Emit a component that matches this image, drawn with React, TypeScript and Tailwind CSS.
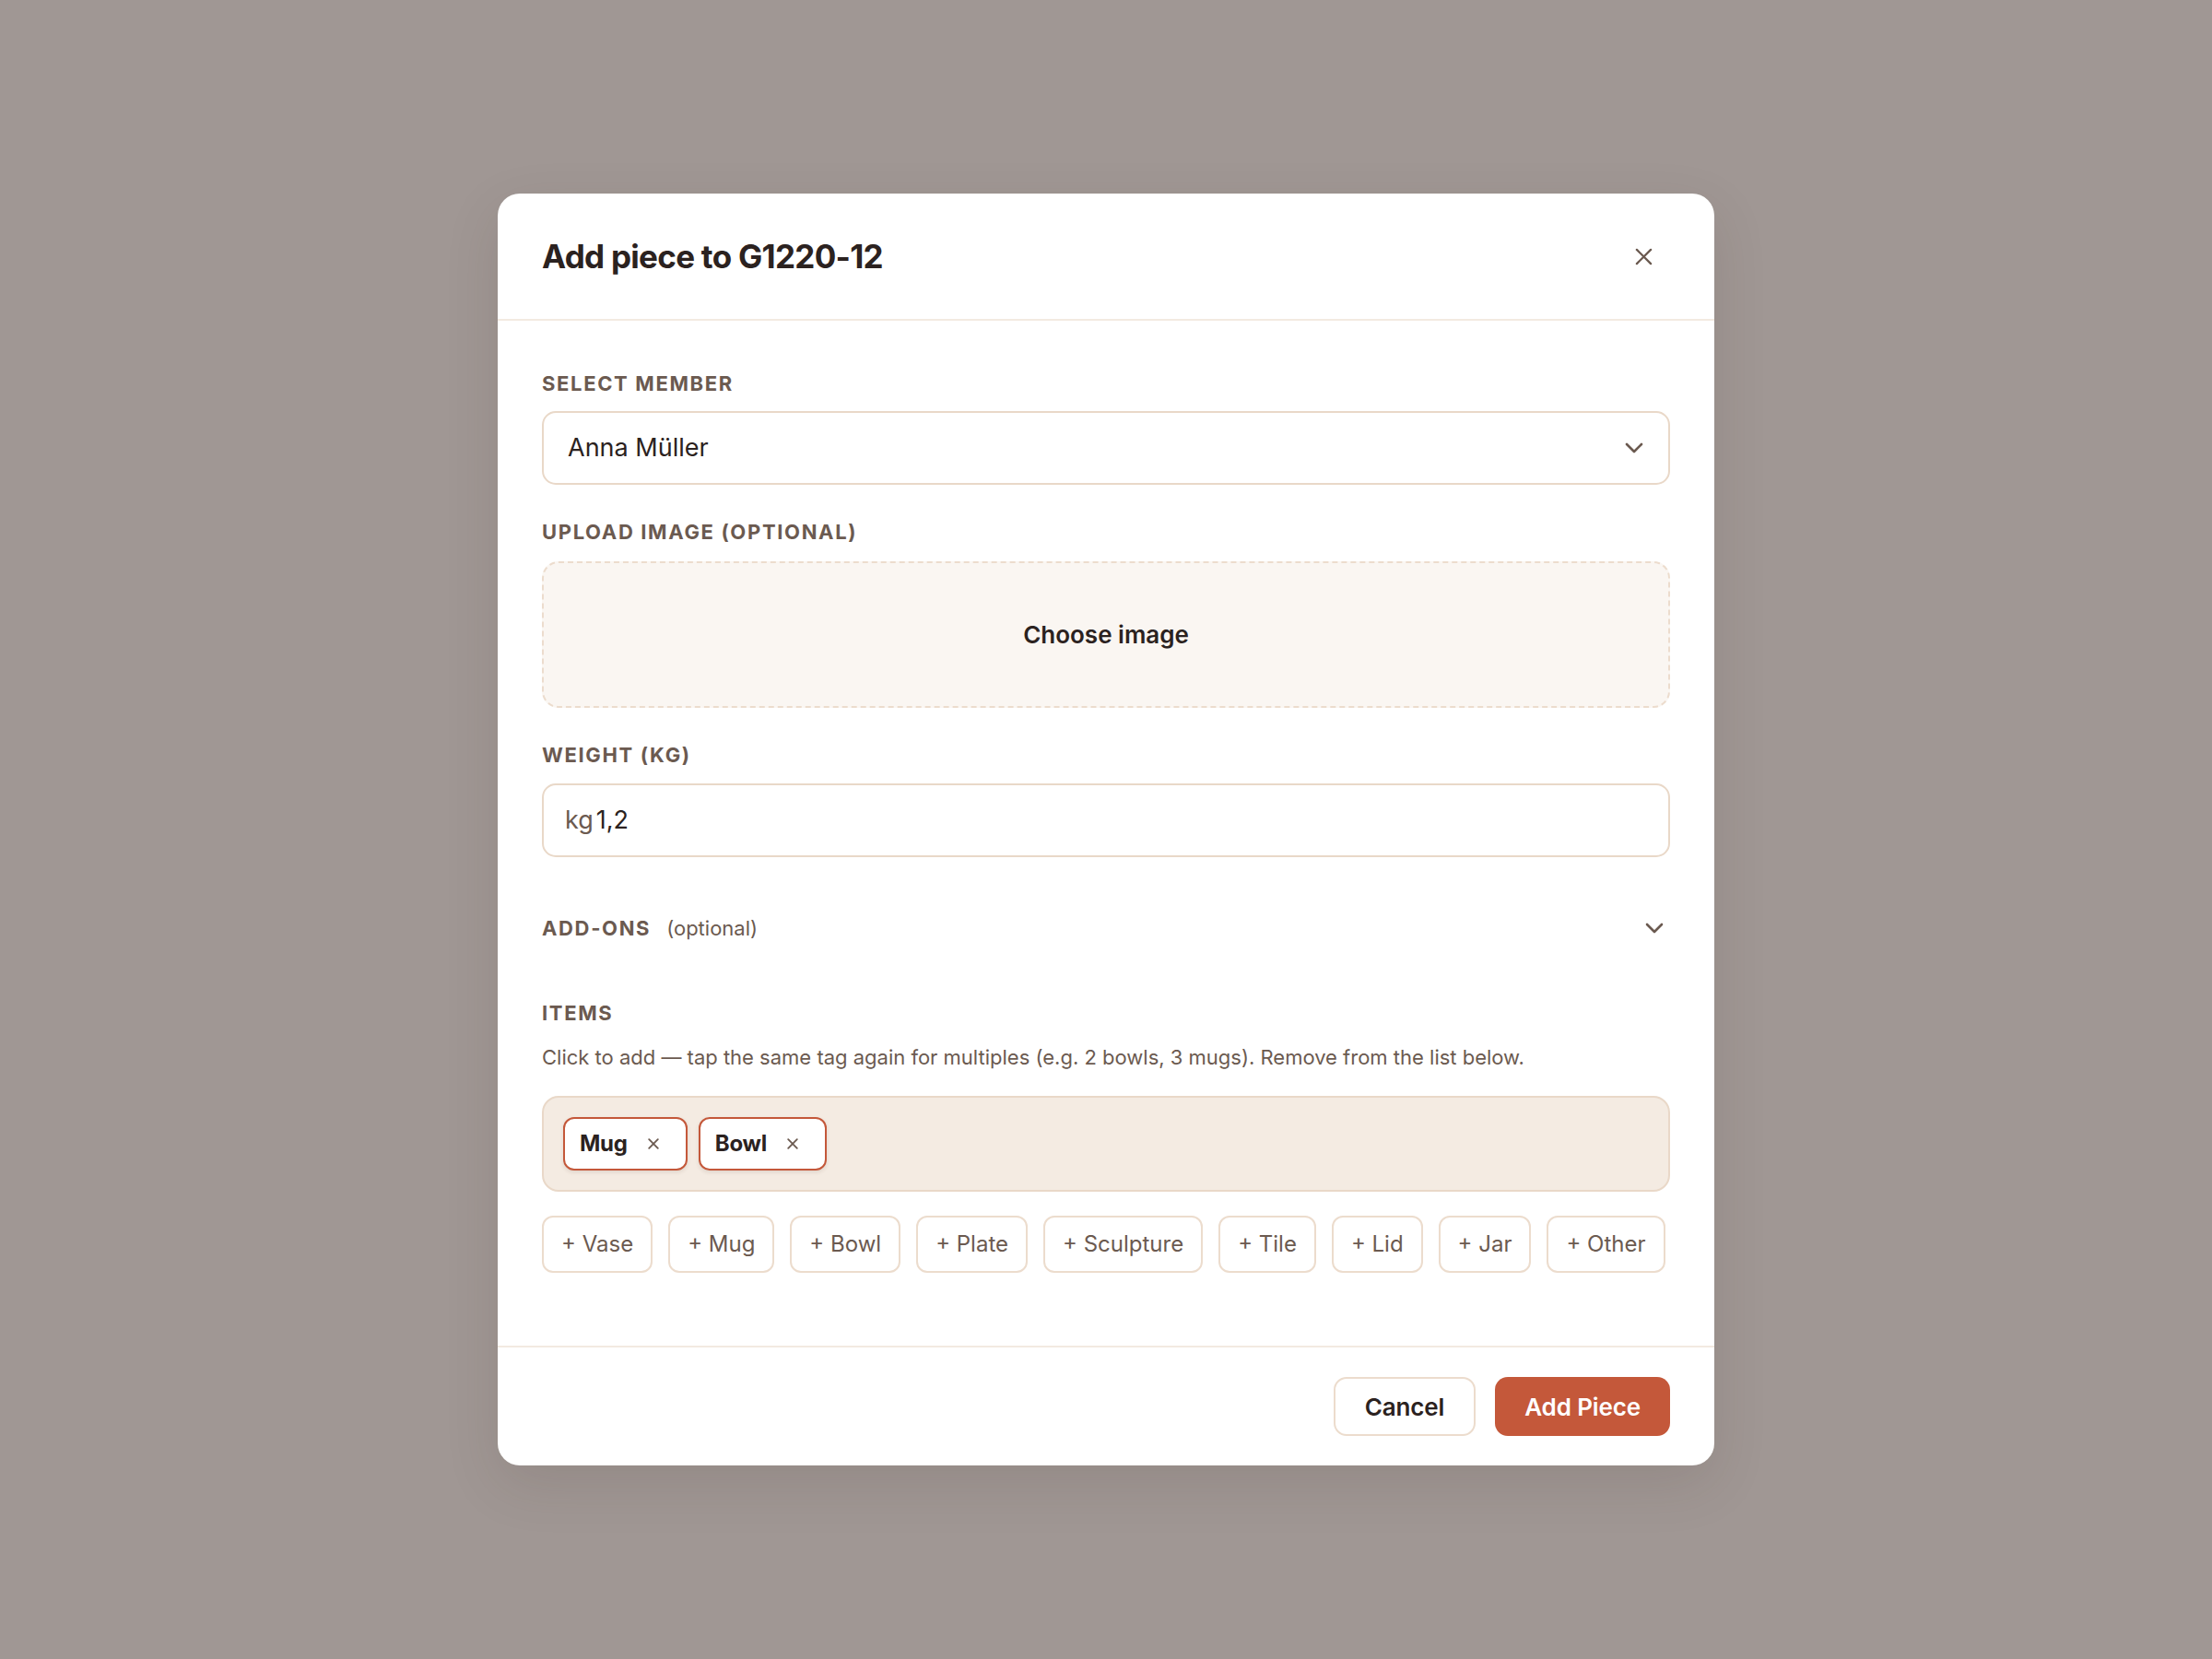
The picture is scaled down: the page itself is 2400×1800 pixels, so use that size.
import React from "react";

const font = { fontFamily: "Inter, 'Noto Sans', 'Liberation Sans', sans-serif" };

function ChevronDown({ className = "" }: { className?: string }) {
  return (
    <svg width="20" height="12" viewBox="0 0 20 12" fill="none" className={className}>
      <path d="M2 2 L10 10 L18 2" stroke="#6b5a50" strokeWidth="2.6" strokeLinecap="round" strokeLinejoin="round" />
    </svg>
  );
}

function CloseIcon({ size = 19, stroke = 2.4 }: { size?: number; stroke?: number }) {
  return (
    <svg width={size} height={size} viewBox="0 0 20 20" fill="none">
      <path d="M2 2 L18 18 M18 2 L2 18" stroke="#6b5a50" strokeWidth={stroke} strokeLinecap="round" />
    </svg>
  );
}

function FieldLabel({ children, className = "" }: { children: React.ReactNode; className?: string }) {
  return (
    <div className={`text-[22px] leading-[30px] font-bold tracking-[0.075em] uppercase text-[#6b5a50] ${className}`}>
      {children}
    </div>
  );
}

const selected = ["Mug", "Bowl"];
const options = ["Vase", "Mug", "Bowl", "Plate", "Sculpture", "Tile", "Lid", "Jar", "Other"];

export default function App() {
  return (
    <div style={font} className="w-full h-screen bg-[#a09794] flex items-center justify-center">
      <div className="w-[1320px] bg-white rounded-[24px] shadow-[0_20px_60px_rgba(60,40,30,0.12)] flex flex-col">
        {/* Header */}
        <div className="flex items-center justify-between px-[48px] py-[48px] border-b-2 border-[#f3eae1]">
          <h2 className="text-[35px] leading-[40px] font-bold text-[#2b2220] tracking-[-0.02em]">Add piece to G1220-12</h2>
          <button className="mr-[19px] flex items-center">
            <CloseIcon />
          </button>
        </div>

        {/* Body */}
        <div className="px-[48px] pt-[53px] pb-[79px] flex flex-col gap-[36px]">
          <div>
            <FieldLabel className="mb-[15px]">Select member</FieldLabel>
            <div className="h-[80px] border-2 border-[#e9d8c8] rounded-[15px] flex items-center justify-between pl-[26px] pr-[27px]">
              <span className="text-[27px] text-[#2b2220]">Anna Müller</span>
              <ChevronDown />
            </div>
          </div>

          <div>
            <FieldLabel className="mb-[17px]">Upload image (optional)</FieldLabel>
            <div className="h-[159px] border-2 border-dashed border-[#ecdccd] bg-[#faf6f2] rounded-[18px] flex items-center justify-center">
              <span className="text-[26px] font-semibold text-[#2b2220]">Choose image</span>
            </div>
          </div>

          <div>
            <FieldLabel className="mb-[16px]">Weight (kg)</FieldLabel>
            <div className="h-[80px] border-2 border-[#e9d8c8] rounded-[15px] flex items-center pl-[23px] pr-[27px] text-[27px]">
              <span className="text-[#6b5a50]">kg</span>
              <span className="text-[#2b2220] ml-[3px]">1,2</span>
            </div>
          </div>

          <div className="h-[82px] flex items-center justify-between pr-[7px]">
            <div className="flex items-center gap-[17px]">
              <FieldLabel>Add-ons</FieldLabel>
              <span className="text-[22px] leading-[30px] text-[#6b5a50]">(optional)</span>
            </div>
            <ChevronDown />
          </div>

          <div>
            <FieldLabel className="mb-[18px]">Items</FieldLabel>
            <p className="text-[22px] leading-[30px] text-[#6b5a50] mb-[27px]">
              Click to add — tap the same tag again for multiples (e.g. 2 bowls, 3 mugs). Remove from the list below.
            </p>
            <div className="border-2 border-[#e9d8c8] bg-[#f4ebe2] rounded-[18px] px-[21px] py-[21px] flex flex-wrap gap-[12px]">
              {selected.map((s) => (
                <div
                  key={s}
                  className="h-[58px] bg-white border-2 border-[#c4583a] rounded-[12px] shadow-[0_2px_4px_rgba(80,50,30,0.12)] flex items-center pl-[16px] pr-[29px] gap-[22px]"
                >
                  <span className="text-[24px] font-bold text-[#2b2220] tracking-[-0.01em]">{s}</span>
                  <CloseIcon size={12} stroke={3} />
                </div>
              ))}
            </div>
            <div className="mt-[26px] flex flex-wrap gap-[17px]">
              {options.map((o) => (
                <button
                  key={o}
                  className="h-[62px] border-2 border-[#ecdccd] bg-white rounded-[12px] px-[19px] text-[24px] text-[#6b5a50]"
                >
                  + {o}
                </button>
              ))}
            </div>
          </div>
        </div>

        {/* Footer */}
        <div className="border-t-2 border-[#f3eae1] px-[48px] py-[32px] flex justify-end gap-[21px]">
          <button className="h-[64px] px-[32px] border-2 border-[#ecdccd] bg-white rounded-[14px] text-[26px] font-semibold text-[#2b2220] tracking-[-0.005em]">
            Cancel
          </button>
          <button className="h-[64px] px-[32px] bg-[#c4583a] rounded-[14px] text-[26px] font-semibold text-white tracking-[-0.005em]">
            Add Piece
          </button>
        </div>
      </div>
    </div>
  );
}
